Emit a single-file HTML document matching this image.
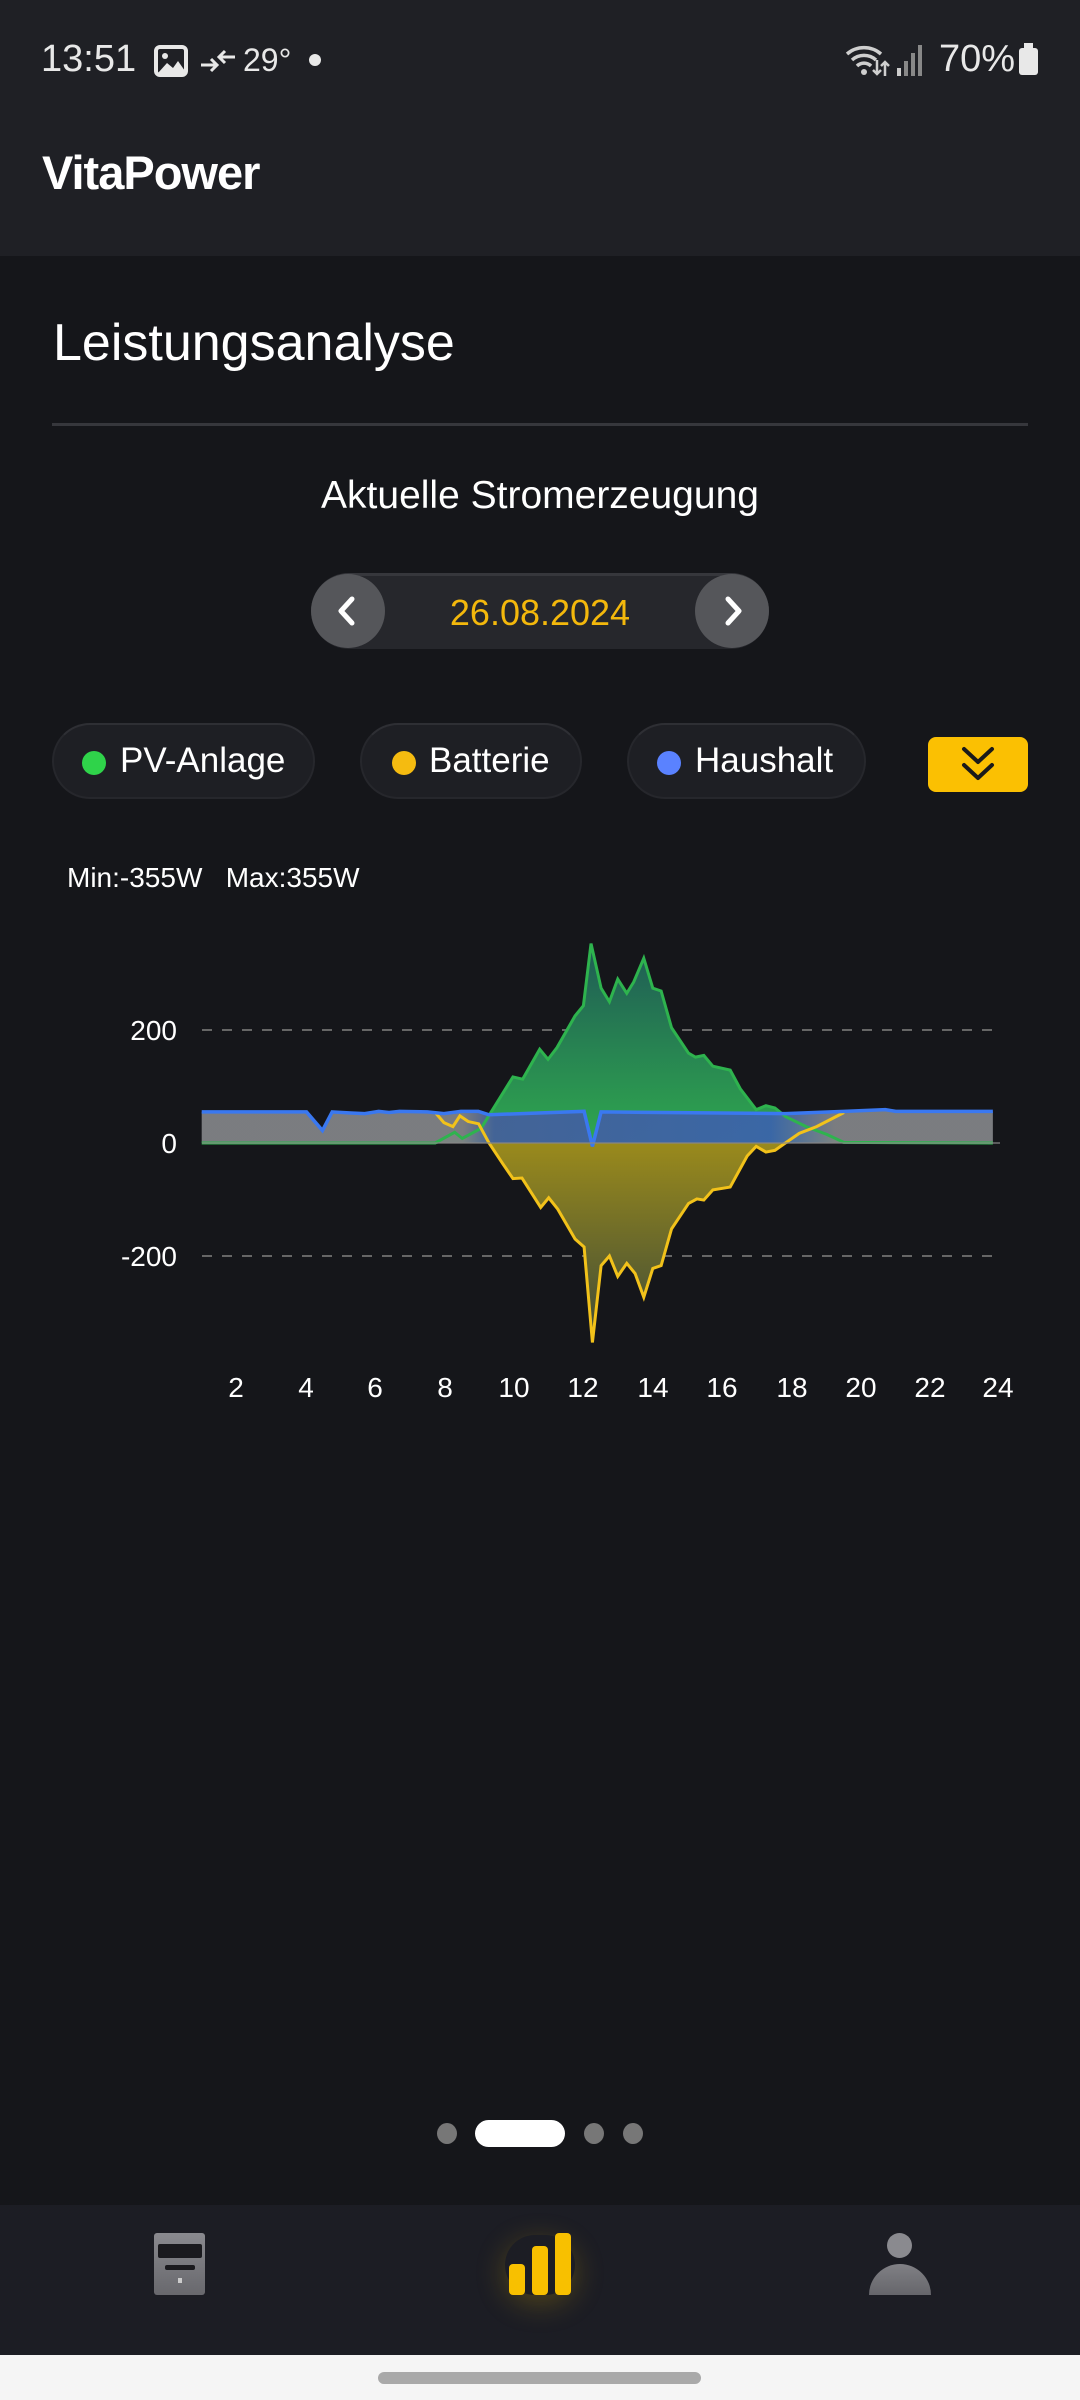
<!DOCTYPE html>
<html><head><meta charset="utf-8"><style>
*{margin:0;padding:0;box-sizing:border-box}
body{width:1080px;height:2400px;background:#15161a;font-family:"Liberation Sans",sans-serif;color:#fff;position:relative;overflow:hidden}
.a{position:absolute;white-space:nowrap}
.chip{position:absolute;top:723px;height:76px;border-radius:38px;background:#1e1f24;border:2px solid #26272c;border-top-color:#2e2f34;font-size:35px;line-height:72px}
.chip i{position:absolute;top:26px;width:24px;height:24px;border-radius:50%}
</style></head><body>
<div class="a" style="left:0;top:0;width:1080px;height:256px;background:#1f2025"></div>
<!-- status bar -->
<div class="a" style="left:41px;top:38px;font-size:38px;color:#e8e8e8">13:51</div>
<svg class="a" style="left:154px;top:45px" width="34" height="32" viewBox="0 0 34 32"><rect x="2" y="2" width="30" height="28" rx="4" fill="none" stroke="#e8e8e8" stroke-width="4"/><circle cx="11" cy="11" r="3" fill="#e8e8e8"/><path d="M4 28 L13 18 L19 23 L24 16 L31 26 L31 28Z" fill="#e8e8e8"/></svg>
<svg class="a" style="left:199px;top:46px" width="38" height="30" viewBox="0 0 38 30"><path d="M2 19h16M12 13l6 6-6 6M36 11H20M26 5l-6 6 6 6" stroke="#e8e8e8" stroke-width="3" fill="none"/></svg>
<div class="a" style="left:243px;top:42px;font-size:32px;color:#e8e8e8">29°</div>
<div class="a" style="left:309px;top:54px;width:12px;height:12px;border-radius:50%;background:#e8e8e8"></div>
<svg class="a" style="left:845px;top:42px" width="46" height="36" viewBox="0 0 46 36"><path d="M2 12a26 26 0 0 1 34 0M7 18a18 18 0 0 1 24 0M12 24a10 10 0 0 1 14 0" stroke="#cfcfcf" stroke-width="3.5" fill="none"/><circle cx="19" cy="30" r="3" fill="#cfcfcf"/><path d="M32 18v14M28 28l4 4 4-4M40 34V20M36 24l4-4 4 4" stroke="#cfcfcf" stroke-width="2.5" fill="none"/></svg>
<svg class="a" style="left:897px;top:44px" width="28" height="32" viewBox="0 0 28 32"><rect x="0" y="24" width="4" height="8" fill="#ccc"/><rect x="7" y="17" width="4" height="15" fill="#888"/><rect x="14" y="9" width="4" height="23" fill="#888"/><rect x="21" y="1" width="4" height="31" fill="#888"/></svg>
<div class="a" style="left:939px;top:38px;font-size:38px;color:#e8e8e8">70%</div>
<div class="a" style="left:1019px;top:48px;width:19px;height:27px;border-radius:3px;background:#e8e8e8"></div>
<div class="a" style="left:1024px;top:43px;width:9px;height:6px;background:#e8e8e8"></div>
<!-- header -->
<div class="a" style="left:42px;top:145px;font-size:47px;font-weight:bold;letter-spacing:-1px">VitaPower</div>
<div class="a" style="left:53px;top:313px;font-size:52px">Leistungsanalyse</div>
<div class="a" style="left:52px;top:423px;width:976px;height:3px;background:#36373c"></div>
<div class="a" style="left:0;width:1080px;top:474px;text-align:center;font-size:39px">Aktuelle Stromerzeugung</div>
<!-- date pill -->
<div class="a" style="left:311px;top:573px;width:458px;height:76px;border-radius:38px;background:#26272c;border-top:3px solid #36373c"></div>
<div class="a" style="left:311px;top:574px;width:74px;height:74px;border-radius:50%;background:#55565a"></div>
<div class="a" style="left:695px;top:574px;width:74px;height:74px;border-radius:50%;background:#55565a"></div>
<svg class="a" style="left:311px;top:574px" width="74" height="74"><path d="M41 25l-11 12 11 12" stroke="#fff" stroke-width="5" fill="none" stroke-linecap="round" stroke-linejoin="round"/></svg>
<svg class="a" style="left:695px;top:574px" width="74" height="74"><path d="M33 25l11 12-11 12" stroke="#fff" stroke-width="5" fill="none" stroke-linecap="round" stroke-linejoin="round"/></svg>
<div class="a" style="left:0;width:1080px;top:592px;text-align:center;font-size:36px;color:#f3b80c">26.08.2024</div>
<!-- chips -->
<div class="chip" style="left:52px;width:263px"><i style="left:28px;background:#2fd34a"></i><span style="position:absolute;left:66px">PV-Anlage</span></div>
<div class="chip" style="left:360px;width:222px"><i style="left:30px;background:#f5bb10"></i><span style="position:absolute;left:67px">Batterie</span></div>
<div class="chip" style="left:627px;width:239px"><i style="left:28px;background:#5a82ff"></i><span style="position:absolute;left:66px">Haushalt</span></div>
<div class="a" style="left:928px;top:737px;width:100px;height:55px;border-radius:8px;background:#fbc002"></div>
<svg class="a" style="left:928px;top:737px" width="100" height="55"><path d="M36 12l14 13 14-13M36 28l14 13 14-13" stroke="#1a1a1a" stroke-width="4" fill="none" stroke-linecap="round" stroke-linejoin="round"/></svg>
<div class="a" style="left:67px;top:862px;font-size:28px">Min:-355W&nbsp;&nbsp;&nbsp;Max:355W</div>
<!-- chart -->
<svg class="a" style="left:0;top:0" width="1080" height="1450">
<defs>
<linearGradient id="gg" x1="0" y1="0" x2="0" y2="1"><stop offset="0" stop-color="#2fa84f"/><stop offset="1" stop-color="#1f5a55"/></linearGradient>
<linearGradient id="yg" x1="0" y1="0" x2="0" y2="1"><stop offset="0" stop-color="#3d4a38"/><stop offset="1" stop-color="#9a8a1c"/></linearGradient>
<linearGradient id="hg" x1="0" y1="0" x2="1" y2="0"><stop offset="0.33" stop-color="#808285"/><stop offset="0.37" stop-color="#44609a"/><stop offset="0.72" stop-color="#3b64aa"/><stop offset="0.8" stop-color="#808285"/></linearGradient>
</defs>
<g font-size="28" fill="#fff" text-anchor="end"><text x="177" y="1040">200</text><text x="177" y="1153">0</text><text x="177" y="1266">-200</text></g>
<g font-size="28" fill="#fff" text-anchor="middle">
<text x="236" y="1397">2</text><text x="306" y="1397">4</text><text x="375" y="1397">6</text><text x="445" y="1397">8</text><text x="514" y="1397">10</text><text x="583" y="1397">12</text><text x="653" y="1397">14</text><text x="722" y="1397">16</text><text x="792" y="1397">18</text><text x="861" y="1397">20</text><text x="930" y="1397">22</text><text x="998" y="1397">24</text></g>
<path d="M202 1030H1000M202 1256H1000" stroke="#666" stroke-width="2" stroke-dasharray="10 10"/>
<g transform="translate(167 1143) scale(34.7 -0.565)">
<path d="M7.73 0L8.29 19 8.51 8 9.05 26 9.97 117 10.25 113 10.74 166 10.98 148 11.24 169 11.76 225 12 243 12.22 353 12.51 274 12.75 250 12.99 290 13.25 265 13.45 285 13.74 327 14 274 14.24 269 14.54 204 15.03 159 15.23 152 15.47 155 15.73 136 16.23 129 16.52 96 16.98 59 17.26 66 17.52 62 17.82 47 18.42 29 19.02 15 19.51 1Z" fill="url(#gg)"/>
<path d="M9.28 0L9.68 -37 9.97 -63 10.23 -62 10.77 -114 11 -97 11.26 -117 11.76 -170 12.02 -184 12.26 -353 12.51 -217 12.75 -200 12.99 -236 13.25 -213 13.49 -231 13.74 -273 14 -222 14.24 -217 14.54 -152 15.03 -107 15.27 -99 15.47 -101 15.73 -83 16.23 -78 16.72 -23 16.98 -6 17.26 -16 17.52 -13 17.82 0Z" fill="url(#yg)"/>
<path d="M1 0V55L4.02 55 4.48 22 4.76 55 5.3 53 5.7 52 6.1 56 6.4 54 6.7 56 7.5 55 7.98 52 8.47 56 8.97 56 9.28 50 12.02 56 12.26 -6 12.51 55 17.82 52 19.51 56 20.7 59 21 56 23.8 56V0Z" fill="url(#hg)" opacity="0.95"/>
<polyline vector-effect="non-scaling-stroke" fill="none" stroke="#2eb34e" stroke-width="3" points="1,0 7.73,0 8.29,19 8.51,8 9.05,26 9.97,117 10.25,113 10.74,166 10.98,148 11.24,169 11.76,225 12,243 12.22,353 12.51,274 12.75,250 12.99,290 13.25,265 13.45,285 13.74,327 14,274 14.24,269 14.54,204 15.03,159 15.23,152 15.47,155 15.73,136 16.23,129 16.52,96 16.98,59 17.26,66 17.52,62 17.82,47 18.42,29 19.02,15 19.51,1 23.8,0"/>
<polyline vector-effect="non-scaling-stroke" fill="none" stroke="#f2c21a" stroke-width="3" points="7.73,54 7.98,36 8.24,29 8.44,48 8.68,38 8.98,34 9.28,0 9.68,-37 9.97,-63 10.23,-62 10.77,-114 11,-97 11.26,-117 11.76,-170 12.02,-184 12.26,-353 12.51,-217 12.75,-200 12.99,-236 13.25,-213 13.49,-231 13.74,-273 14,-222 14.24,-217 14.54,-152 15.03,-107 15.27,-99 15.47,-101 15.73,-83 16.23,-78 16.72,-23 16.98,-6 17.26,-16 17.52,-13 17.82,0 18.22,17 18.72,29 19.51,54"/>
<polyline vector-effect="non-scaling-stroke" fill="none" stroke="#3a78f0" stroke-width="3.5" points="1,55 4.02,55 4.48,22 4.76,55 5.3,53 5.7,52 6.1,56 6.4,54 6.7,56 7.5,55 7.98,52 8.47,56 8.97,56 9.28,50 12.02,56 12.26,-6 12.51,55 17.82,52 19.51,56 20.7,59 21,56 23.8,56"/>
</g>
<path d="M202 1143H1000" stroke="#888" stroke-width="2" opacity="0.6"/>
</svg>
<!-- page dots -->
<div class="a" style="left:437px;top:2123px;width:20px;height:21px;border-radius:50%;background:#777"></div>
<div class="a" style="left:475px;top:2120px;width:90px;height:27px;border-radius:14px;background:#fff"></div>
<div class="a" style="left:584px;top:2123px;width:20px;height:21px;border-radius:50%;background:#777"></div>
<div class="a" style="left:623px;top:2123px;width:20px;height:21px;border-radius:50%;background:#777"></div>
<!-- nav -->
<div class="a" style="left:0;top:2205px;width:1080px;height:150px;background:#1c1d24"></div>
<div class="a" style="left:154px;top:2233px;width:51px;height:62px;border-radius:3px;background:linear-gradient(#8a8a8f,#68686d)"></div>
<div class="a" style="left:158px;top:2244px;width:44px;height:14px;border-radius:2px;background:#1a1a1e"></div>
<div class="a" style="left:165px;top:2265px;width:30px;height:5px;border-radius:2px;background:#1a1a1e"></div>
<div class="a" style="left:178px;top:2278px;width:4px;height:5px;background:#ccc"></div>
<div class="a" style="left:505px;top:2235px;width:70px;height:60px;border-radius:30px;box-shadow:0 8px 30px rgba(245,190,0,0.25)"></div>
<div class="a" style="left:509px;top:2264px;width:16px;height:31px;border-radius:4px;background:#f8c000"></div>
<div class="a" style="left:532px;top:2246px;width:16px;height:49px;border-radius:4px;background:#f8c000"></div>
<div class="a" style="left:555px;top:2233px;width:16px;height:62px;border-radius:4px;background:#f8c000"></div>
<div class="a" style="left:887px;top:2233px;width:25px;height:25px;border-radius:50%;background:#8a8a8f"></div>
<div class="a" style="left:869px;top:2264px;width:62px;height:31px;border-radius:31px 31px 0 0;background:linear-gradient(#808085,#66666b)"></div>
<div class="a" style="left:0;top:2355px;width:1080px;height:45px;background:#f5f5f5"></div>
<div class="a" style="left:378px;top:2372px;width:323px;height:12px;border-radius:6px;background:#a9a9a9"></div>
</body></html>
